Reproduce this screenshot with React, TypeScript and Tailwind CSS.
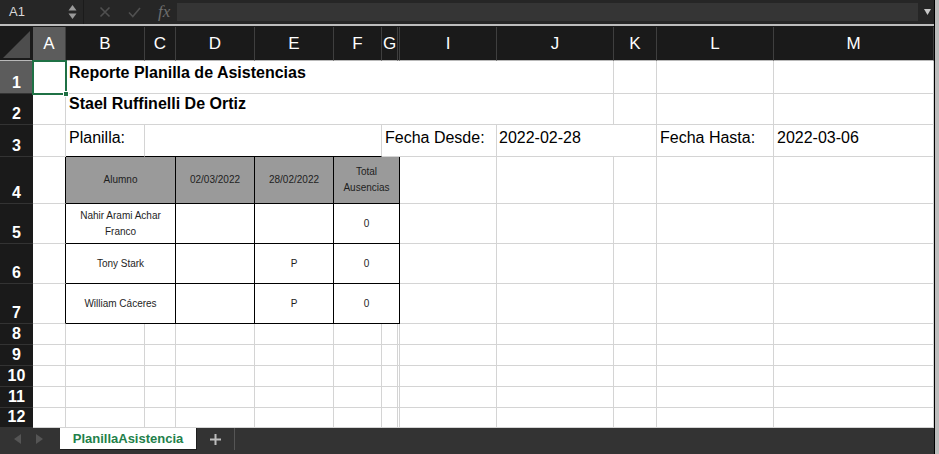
import React from 'react';
import clsx from 'clsx';
import { twMerge } from 'tailwind-merge';

const COLS = ['A', 'B', 'C', 'D', 'E', 'F', 'G', 'H', 'I', 'J', 'K', 'L', 'M'];

type CellProps = {
  span?: string;
  className?: string;
  children?: React.ReactNode;
};

function Cell({ span, className, children }: CellProps) {
  return (
    <div
      className={twMerge(
        'border-r border-b border-[#d4d4d4] whitespace-nowrap text-black',
        span,
        className
      )}
    >
      {children}
    </div>
  );
}

function RowHead({ n, active }: { n: number; active?: boolean }) {
  return (
    <div
      className={clsx(
        'flex items-end justify-center pb-[1px] border-b border-[#333] text-white font-bold text-[16px] leading-[18px]',
        active ? 'bg-[#5c5c5c]' : 'bg-[#1a1a1a]'
      )}
    >
      {n}
    </div>
  );
}

function TopBar() {
  return (
    <div className="h-[24px] flex items-center bg-[#262626] text-[#d8d8d8]">
      <div className="w-[84px] h-full flex items-center justify-between pl-[9px] pr-[6px] border-r border-[#1b1b1b]">
        <span className="text-[13px]">A1</span>
        <svg width="9" height="16" viewBox="0 0 9 16">
          <path d="M4.5 1 L8.5 6.5 L0.5 6.5 Z" fill="#9a9a9a" />
          <path d="M4.5 15 L8.5 9.5 L0.5 9.5 Z" fill="#9a9a9a" />
        </svg>
      </div>
      <div className="flex items-center gap-[17px] pl-[15px]">
        <svg width="12" height="12" viewBox="0 0 12 12">
          <path d="M1.5 1.5 L10.5 10.5 M10.5 1.5 L1.5 10.5" stroke="#505050" strokeWidth="1.6" />
        </svg>
        <svg width="13" height="11" viewBox="0 0 13 11">
          <path d="M1 5.5 L4.8 9.5 L12 1" stroke="#505050" strokeWidth="1.6" fill="none" />
        </svg>
        <span className="text-[17px] italic text-[#6e6e6e] font-['Liberation_Serif',serif] leading-none -mt-[2px]">
          fx
        </span>
      </div>
      <div className="ml-[7px] w-[741px] h-[18px] bg-[#353535]" />
      <svg className="ml-[6px]" width="7" height="6" viewBox="0 0 7 6">
        <path d="M0 0 L7 0 L3.5 6 Z" fill="#c8c8c8" />
      </svg>
    </div>
  );
}

function Sheet() {
  const th =
    'bg-[#9a9a9a] border-r-black border-b-black flex items-center justify-center text-center text-[10px] leading-[16px] text-[#1e1e1e] whitespace-normal';
  const td =
    'border-r-black border-b-black flex items-center justify-center text-center text-[10px] leading-[16px] text-[#1e1e1e] whitespace-normal';
  const txt = 'pl-[3px] pt-[4px] text-[16px] leading-[18px]';
  const body = [
    { name: 'Nahir Arami Achar Franco', d: '', e: '', tot: '0' },
    { name: 'Tony Stark', d: '', e: 'P', tot: '0' },
    { name: 'William Cáceres', d: '', e: 'P', tot: '0' },
  ];

  return (
    <div className="relative bg-white grid grid-cols-[33px_33px_79px_31px_79px_79px_48px_16px_2px_97px_117px_43px_117px_160px] grid-rows-[34px_33px_31px_32px_47px_40px_40px_40px_21px_21px_21px_21px_20px]">
      {/* column header */}
      <div className="bg-[#1a1a1a] border-b border-[#b9b9b9] flex items-start">
        <svg width="33" height="33" viewBox="0 0 33 33">
          <path d="M30 4 L30 31 L3 31 Z" fill="#4d4d4d" />
        </svg>
      </div>
      {COLS.map((c) => (
        <div
          key={c}
          className={clsx(
            'flex items-center justify-center border-r border-b border-r-[#3f3f3f] border-b-[#b9b9b9] text-white text-[17px]',
            c === 'A' ? 'bg-[#5c5c5c]' : 'bg-[#1a1a1a]'
          )}
        >
          {c === 'H' ? '' : c}
        </div>
      ))}

      {/* row 1 */}
      <RowHead n={1} active />
      <Cell />
      <Cell span="col-span-9" className="pl-[3px] pt-[3px] font-bold text-[16px] leading-[18px]">
        Reporte Planilla de Asistencias
      </Cell>
      <Cell />
      <Cell />
      <Cell />

      {/* row 2 */}
      <RowHead n={2} />
      <Cell />
      <Cell span="col-span-9" className="pl-[3px] pt-[1px] font-bold text-[16px] leading-[18px]">
        Stael Ruffinelli De Ortiz
      </Cell>
      <Cell />
      <Cell />
      <Cell />

      {/* row 3 */}
      <RowHead n={3} />
      <Cell />
      <Cell className={clsx(txt, 'border-b-black')}>Planilla:</Cell>
      <Cell span="col-span-4" className="border-b-black" />
      <Cell span="col-span-3" className={txt}>
        Fecha Desde:
      </Cell>
      <Cell span="col-span-2" className={clsx(txt, 'pl-[2px]')}>
        2022-02-28
      </Cell>
      <Cell className={txt}>Fecha Hasta:</Cell>
      <Cell className={txt}>2022-03-06</Cell>

      {/* row 4: table header */}
      <RowHead n={4} />
      <Cell className="border-r-black" />
      <Cell span="col-span-2" className={th}>Alumno</Cell>
      <Cell className={th}>02/03/2022</Cell>
      <Cell className={th}>28/02/2022</Cell>
      <Cell span="col-span-3" className={th}>
        <span>
          Total
          <br />
          Ausencias
        </span>
      </Cell>
      <Cell />
      <Cell />
      <Cell />
      <Cell />
      <Cell />

      {/* rows 5-7 */}
      {body.map((r, i) => (
        <React.Fragment key={r.name}>
          <RowHead n={5 + i} />
          <Cell className="border-r-black" />
          <Cell span="col-span-2" className={clsx(td, i === 0 && 'px-[10px]')}>
            {r.name}
          </Cell>
          <Cell className={td}>{r.d}</Cell>
          <Cell className={td}>{r.e}</Cell>
          <Cell span="col-span-3" className={td}>{r.tot}</Cell>
          <Cell />
          <Cell />
          <Cell />
          <Cell />
          <Cell />
        </React.Fragment>
      ))}

      {/* rows 8-12 */}
      {[8, 9, 10, 11, 12].map((n) => (
        <React.Fragment key={n}>
          <RowHead n={n} />
          {COLS.map((c) => (
            <Cell key={c} />
          ))}
        </React.Fragment>
      ))}

      {/* selection on A1 */}
      <div className="absolute left-[32px] top-[33px] w-[35px] h-[35px] border-2 border-[#1f7145] pointer-events-none">
        <div className="absolute -right-[4px] -bottom-[4px] w-[6px] h-[6px] bg-[#1f7145] border border-white" />
      </div>
    </div>
  );
}

function TabBar() {
  return (
    <div className="h-[26px] flex items-start bg-[#333333]">
      <div className="w-[60px] h-[22px] flex items-center gap-[14px] pl-[14px]">
        <svg width="8" height="10" viewBox="0 0 8 10">
          <path d="M7 0 L7 10 L0 5 Z" fill="#555" />
        </svg>
        <svg width="8" height="10" viewBox="0 0 8 10">
          <path d="M0 0 L0 10 L7 5 Z" fill="#555" />
        </svg>
      </div>
      <div className="w-[137px] h-[22px] bg-white border-r border-b border-[#1e1e1e] flex items-center justify-center text-[13px] font-bold text-[#22804a]">
        PlanillaAsistencia
      </div>
      <div className="w-[38px] h-[22px] flex items-center justify-center border-r border-[#555]">
        <svg width="11" height="11" viewBox="0 0 11 11">
          <path d="M5.5 0 L5.5 11 M0 5.5 L11 5.5" stroke="#bdbdbd" strokeWidth="2" />
        </svg>
      </div>
    </div>
  );
}

export default function App() {
  return (
    <div className="w-[939px] h-[454px] overflow-hidden flex font-['Liberation_Sans',Arial,sans-serif] bg-[#262626]">
      <div className="w-[934px] flex flex-col">
        <TopBar />
        <div className="h-[2px] bg-[#bdbdbd]" />
        <div className="h-[1px] bg-[#1a1a1a]" />
        <Sheet />
        <TabBar />
      </div>
      <div className="w-[5px] h-full border-l border-black bg-[#bcbcbc]" />
    </div>
  );
}
